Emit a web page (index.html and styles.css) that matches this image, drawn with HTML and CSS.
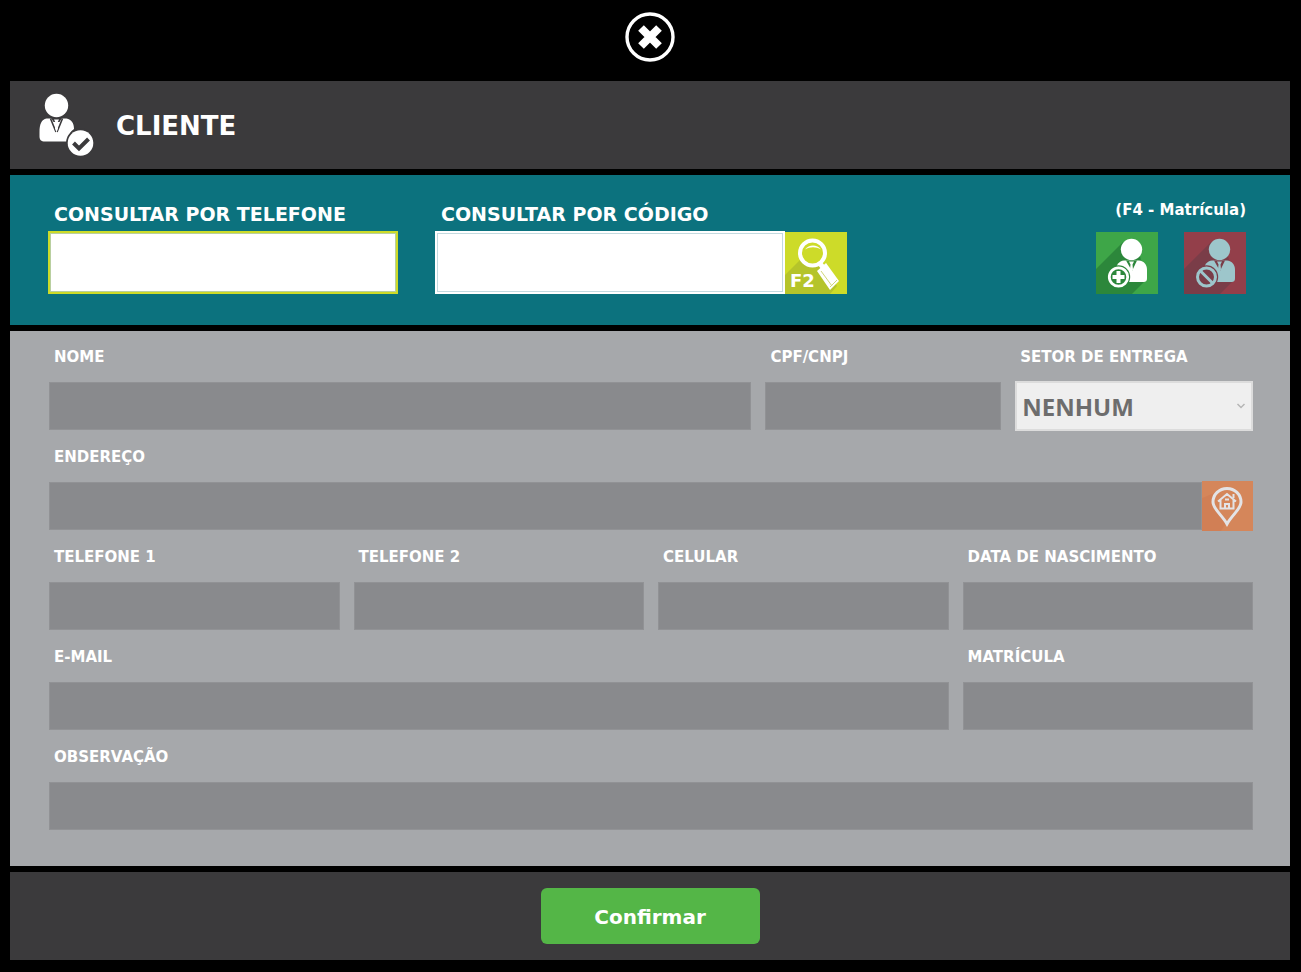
FILE: index.html
```html
<!DOCTYPE html>
<html lang="pt-BR">
<head>
  <meta charset="UTF-8" />
  <title>Cliente</title>
  <meta name="viewport" content="width=device-width, initial-scale=1.0"/>
  <link rel="stylesheet" href="styles.css">
</head>
<body>
  <div class="topbar">
    <button class="close-button" type="button" aria-label="Fechar">
      <svg width="50" height="50" viewBox="0 0 50 50">
        <circle cx="25" cy="25" r="23" fill="none" stroke="#fff" stroke-width="3.4"/>
        <path d="M16 16L34 34M34 16L16 34" stroke="#fff" stroke-width="8"/>
      </svg>
    </button>
  </div>

  <header class="panel header">
    <svg width="56" height="64" viewBox="0 0 56 64">
      <circle cx="17.500" cy="12.500" r="11.700" fill="#fff"/>
      <path d="M0.500 39c0-8 2-12.500 7-13.500h20c5 1 7.500 4.500 7.500 10.500-3.500 2.500-5.500 6-6 12.500H6c-4 0-5.500-2-5.500-5z" fill="#fff"/>
      <path d="M11.500 25.500L17 39M23.500 25.500L18 39" stroke="#3b3a3c" stroke-width="1.600"/>
      <path d="M12 25h11l-2.500 4h-6z" fill="#3b3a3c"/>
      <path d="M15 26.500h5l-1.500 3 .500 6-1.500 4-1.500-4 .500-6z" fill="#fff"/>
      <circle cx="41.500" cy="50" r="14.500" fill="#3b3a3c"/>
      <circle cx="41.500" cy="50" r="12.800" fill="#fff"/>
      <path d="M34.500 50l5.500 5.500 9.500-9.500" fill="none" stroke="#3b3a3c" stroke-width="4"/>
    </svg>
    <h1>CLIENTE</h1>
  </header>

  <section class="panel search">
    <div class="search-group">
      <label for="phoneSearch">CONSULTAR POR TELEFONE</label>
      <input class="search-input active" id="phoneSearch" type="text"/>
    </div>
    <div class="search-group">
      <label for="codeSearch">CONSULTAR POR CÓDIGO</label>
      <div class="search-row">
        <input class="search-input" id="codeSearch" type="text"/>
        <button class="tile search-button" type="button" aria-label="Pesquisar (F2)">
          <svg width="62" height="62" viewBox="0 0 62 62">
            <path d="M15 28L0 43V62H45L52 54 35 28z" fill="#b5c42a"/>
            <circle cx="27.500" cy="21" r="12.500" fill="#cddb29" stroke="#fff" stroke-width="4"/>
            <path d="M20 17.500c4-5.500 12-5.500 16 0-5-3-11-3-16 0z" fill="#fff"/>
            <path d="M34.500 31l4 5" stroke="#fff" stroke-width="5"/>
            <path d="M32 39l9-8 13 18-9 9z" fill="#fff"/>
            <path d="M45 55l7-7M36 39l11 15" stroke="#d0d67a" stroke-width="1"/>
          </svg>
          <span class="shortcut">F2</span>
        </button>
      </div>
    </div>
    <div class="actions">
      <span class="hint">(F4 - Matrícula)</span>
      <div class="action-row">
        <button class="tile add-button" type="button" aria-label="Adicionar cliente">
          <svg width="62" height="62" viewBox="0 0 62 62">
            <path d="M27 10L0 37V62H36L50 48 44 24z" fill="#2c873b"/>
            <circle cx="35.500" cy="17.500" r="10.700" fill="#fff"/>
            <path d="M20 38c0-5 3-9 8-9.500h15c5 .500 8 4 8 9.500v8c0 3-1 4-4 4H30z" fill="#fff"/>
            <path d="M30 28.500h11L36 39z" fill="#2c873b"/>
            <path d="M33 29.500h5l-1.500 3 .500 5-1.500 3-1.500-3 .500-5z" fill="#fff"/>
            <circle cx="22.500" cy="45" r="11.700" fill="#2c873b"/>
            <circle cx="22.500" cy="45" r="9.200" fill="#2c873b" stroke="#fff" stroke-width="2.800"/>
            <path d="M22.500 39v12M16.500 45h12" stroke="#fff" stroke-width="4"/>
          </svg>
        </button>
        <button class="tile remove-button" type="button" aria-label="Bloquear cliente" disabled>
          <svg width="62" height="62" viewBox="0 0 62 62">
            <path d="M27 10L0 37V62H36L50 48 44 24z" fill="#7a3d48"/>
            <circle cx="35.500" cy="17.500" r="10.700" fill="#9dc6cb"/>
            <path d="M20 38c0-5 3-9 8-9.500h15c5 .500 8 4 8 9.500v8c0 3-1 4-4 4H30z" fill="#9dc6cb"/>
            <path d="M30 28.500h11L36 39z" fill="#7a3d48"/>
            <path d="M33 29.500h5l-1.500 3 .500 5-1.500 3-1.500-3 .500-5z" fill="#9dc6cb"/>
            <circle cx="22.500" cy="45" r="11.700" fill="#7a3d48"/>
            <circle cx="22.500" cy="45" r="9" fill="none" stroke="#9dc6cb" stroke-width="3"/>
            <path d="M16.500 39l12 12" stroke="#9dc6cb" stroke-width="3"/>
          </svg>
        </button>
      </div>
    </div>
  </section>

  <form class="panel form" id="clientForm">
    <div class="row row-name">
      <div class="field">
        <label for="name">NOME</label>
        <input id="name" type="text" disabled/>
      </div>
      <div class="field">
        <label for="document">CPF/CNPJ</label>
        <input id="document" type="text" disabled/>
      </div>
      <div class="field">
        <label for="sector">SETOR DE ENTREGA</label>
        <div class="select-box">
          <select id="sector" disabled>
            <option>NENHUM</option>
          </select>
          <svg class="chevron" width="10" height="8" viewBox="0 0 10 8">
            <path d="M1.500 2L5 5.500 8.500 2" fill="none" stroke="#b5b5b5" stroke-width="1.500"/>
          </svg>
        </div>
      </div>
    </div>
    <div class="row">
      <div class="field full">
        <label for="address">ENDEREÇO</label>
        <div class="address-box">
          <input id="address" type="text" disabled/>
          <button class="map-button" type="button" aria-label="Localizar endereço" disabled>
            <svg width="51" height="50" viewBox="0 0 51 50">
              <path d="M3 16l9-4 12 30-5 8H0V17z" fill="#d17f55"/>
              <path d="M25 43C20 34 11 28 11 21a14 13.500 0 0 1 28 0c0 7-9 13-14 22z" fill="#d5865a" stroke="#e3e3e6" stroke-width="3"/>
              <path d="M16 20.500l9-7.500 9 7.500M18.500 19v8.500h13V19M23 27v-4h4v4M23 18.500h4" fill="none" stroke="#e3e3e6" stroke-width="2"/>
              <path d="M31.500 13v4" stroke="#e3e3e6" stroke-width="2"/>
            </svg>
          </button>
        </div>
      </div>
    </div>
    <div class="row">
      <div class="field">
        <label for="phone1">TELEFONE 1</label>
        <input id="phone1" type="text" disabled/>
      </div>
      <div class="field">
        <label for="phone2">TELEFONE 2</label>
        <input id="phone2" type="text" disabled/>
      </div>
      <div class="field">
        <label for="mobile">CELULAR</label>
        <input id="mobile" type="text" disabled/>
      </div>
      <div class="field">
        <label for="birthDate">DATA DE NASCIMENTO</label>
        <input id="birthDate" type="text" disabled/>
      </div>
    </div>
    <div class="row">
      <div class="field wide">
        <label for="email">E-MAIL</label>
        <input id="email" type="email" disabled/>
      </div>
      <div class="field">
        <label for="registration">MATRÍCULA</label>
        <input id="registration" type="text" disabled/>
      </div>
    </div>
    <div class="row">
      <div class="field full">
        <label for="notes">OBSERVAÇÃO</label>
        <input id="notes" type="text" disabled/>
      </div>
    </div>
  </form>

  <footer class="panel footer">
    <button class="confirm-button" type="submit" form="clientForm">Confirmar</button>
  </footer>
</body>
</html>
```
FILE: styles.css
```css
* { box-sizing: border-box; }
body {
  margin: 0;
  padding: 0 11px 12px 10px;
  background: #000;
  color: white;
  font-family: Verdana, "DejaVu Sans", sans-serif;
  font-weight: bold;
}
h1 { margin: 0; padding-top: 2px; font-size: 26px; line-height: 32px; }
svg { display: block; }
button, input, select { font-family: inherit; font-weight: bold; margin: 0; border-radius: 0; }
button { padding: 0; border: none; color: white; cursor: pointer; }
button:disabled { cursor: default; }

.topbar { display: flex; justify-content: center; padding: 12px 0 19px; }
.close-button { background: none; }

.panel { margin-bottom: 6px; }
.header {
  display: flex;
  align-items: center;
  gap: 21px;
  height: 88px;
  padding: 0 29px;
  background: #3b3a3c;
}

.search {
  display: flex;
  align-items: flex-start;
  gap: 37px;
  height: 150px;
  padding: 26px 44px 0 38px;
  background: #0c727e;
}
.search-group label { display: block; padding: 1px 0 5px 6px; font-size: 19px; line-height: 24px; }
.search-row { display: flex; }
.search-input {
  display: block;
  width: 350px;
  height: 63px;
  padding: 0 10px;
  border: 2px solid white;
  outline: 1px solid #c3dadf;
  outline-offset: -3px;
  background: white;
  color: #333;
  font-size: 26px;
}
.search-input.active { border-color: #cddb29; outline-color: #b9cfa0; }
.tile { width: 62px; height: 62px; }
.search-button { position: relative; align-self: flex-end; background: #cddb29; }
.shortcut { position: absolute; left: 5px; bottom: 3px; font-size: 18px; line-height: 20px; }
.actions { margin-left: auto; text-align: right; }
.hint { display: block; margin-bottom: 13px; font-size: 15px; line-height: 18px; }
.action-row { display: flex; justify-content: flex-end; gap: 26px; }
.add-button { background: #3ea648; }
.remove-button { background: #933f4a; }

.form { padding: 16px 37px 19px 39px; background: #a6a8ab; }
.row { display: grid; grid-template-columns: repeat(4, 1fr); gap: 14px; margin-bottom: 16px; }
.row-name { grid-template-columns: 703fr 236fr 238fr; }
.full { grid-column: span 4; }
.wide { grid-column: span 3; }
.field { display: flex; flex-direction: column; }
.field label { margin-bottom: 14px; padding-left: 5px; font-size: 15px; line-height: 20px; }
.field input {
  display: block;
  width: 100%;
  height: 48px;
  margin: 1px 0;
  padding: 0 8px;
  border: 1px solid #919295;
  background: #898a8d;
  color: white;
  font-size: 20px;
}
.select-box { position: relative; }
.select-box select {
  display: block;
  appearance: none;
  width: 100%;
  height: 50px;
  padding: 0 20px 0 5px;
  border: 2px solid #dcdcdc;
  background: #efefef;
  color: #6d6d6d;
  font-family: "Open Sans", sans-serif;
  font-size: 24px;
  opacity: 1;
}
.chevron { position: absolute; right: 7px; top: 21px; }
.address-box { display: flex; }
.map-button { flex: none; width: 51px; height: 50px; background: #d5865a; }

.footer {
  display: flex;
  align-items: center;
  justify-content: center;
  height: 88px;
  margin-bottom: 0;
  background: #3b3a3c;
}
.confirm-button { width: 219px; height: 56px; padding-top: 2px; border-radius: 6px; background: #54b647; font-size: 20px; }
```
